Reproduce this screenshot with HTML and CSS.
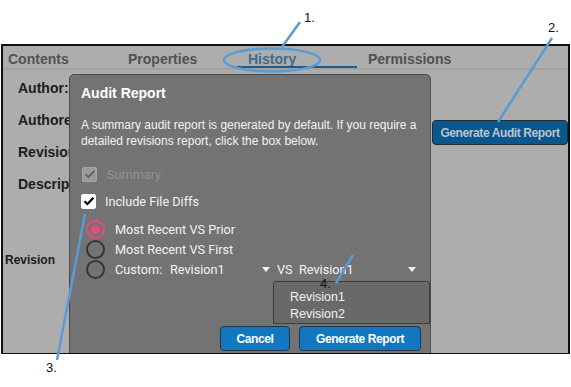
FILE: index.html
```html
<!DOCTYPE html>
<html lang="en">

<head>
    <meta charset="UTF-8">
    <meta name="viewport" content="width=device-width, initial-scale=1.0">
    <title>Audit Report</title>
    <link rel="stylesheet" href="styles.css">
</head>

<body>
    <div class="frame">
        <div class="tabs">
            <div class="tab">Contents</div>
            <div class="tab">Properties</div>
            <div class="tab active">History</div>
            <div class="tab">Permissions</div>
        </div>

        <div class="panel">
            <div class="fields">
                <div class="field">Author:</div>
                <div class="field">Authored Date:</div>
                <div class="field">Revision:</div>
                <div class="field">Description:</div>
                <div class="field small">Revision</div>
            </div>
            <div class="actions">
                <button class="btn-audit">Generate Audit Report</button>
            </div>
        </div>

        <div class="dialog">
            <h2 class="dialog-title">Audit Report</h2>
            <p class="dialog-text">A summary audit report is generated by default. If you require a detailed revisions report, click the box below.</p>

            <div class="checks">
                <label class="check-row disabled">
                    <span class="box">
                        <svg width="12" height="10" viewBox="0 0 12 10"><path d="M1.5 5.2 L4.4 8 L10.5 1.8" fill="none" stroke="#666" stroke-width="2"/></svg>
                    </span>
                    Summary
                </label>
                <label class="check-row">
                    <span class="box on">
                        <svg width="12" height="10" viewBox="0 0 12 10"><path d="M1.5 5.2 L4.4 8 L10.5 1.8" fill="none" stroke="#000" stroke-width="2.2"/></svg>
                    </span>
                    Include File Diffs
                </label>
            </div>

            <div class="radios">
                <div class="radio-row"><span class="radio checked"></span>Most Recent VS Prior</div>
                <div class="radio-row"><span class="radio"></span>Most Recent VS First</div>
                <div class="radio-row">
                    <span class="radio"></span>
                    <span class="custom-label">Custom:</span>
                    <span class="select sel-from">Revision1<i class="caret"></i></span>
                    <span class="vs">VS</span>
                    <span class="select sel-to">Revision1<i class="caret"></i></span>
                </div>
            </div>

            <div class="menu">
                <div class="menu-item">Revision1</div>
                <div class="menu-item">Revision2</div>
            </div>

            <div class="dialog-footer">
                <button class="btn btn-cancel">Cancel</button>
                <button class="btn btn-generate">Generate Report</button>
            </div>
        </div>
    </div>

    <svg class="notes" width="571" height="387" viewBox="0 0 571 387">
        <g fill="none" stroke="#5b9bd5" stroke-width="2.5">
            <ellipse cx="272" cy="60" rx="48" ry="11.5"/>
            <line x1="300" y1="22" x2="282" y2="47"/>
            <line x1="552" y1="38" x2="498" y2="122"/>
            <line x1="85" y1="214" x2="57" y2="360"/>
            <line x1="353" y1="255" x2="336" y2="283"/>
        </g>
        <g class="note-num">
            <text x="304" y="22">1.</text>
            <text x="548" y="32">2.</text>
            <text x="46" y="372">3.</text>
            <text x="320" y="288">4.</text>
        </g>
    </svg>
</body>

</html>
```

FILE: styles.css
```css
* {
    box-sizing: border-box;
}

body {
    margin: 0;
    width: 571px;
    height: 387px;
    position: relative;
    overflow: hidden;
    background-color: #ffffff;
    font-family: "Liberation Sans", Arial, sans-serif;
}

.frame {
    position: relative;
    width: 569px;
    height: 310px;
    margin: 44px 0 0 1px;
    border: 2px solid #111;
    border-bottom-width: 1px;
    background-color: #adadad;
    overflow: hidden;
}

/* tabs */
.tabs {
    display: flex;
    height: 24px;
    border-bottom: 2px solid #a2a2a2;
}

.tab {
    position: relative;
    width: 120px;
    padding-left: 5px;
    line-height: 26px;
    font-size: 14px;
    font-weight: bold;
    color: #525252;
}

.tab.active {
    color: #3f6b90;
}

.tab.active::after {
    content: "";
    position: absolute;
    left: -6px;
    right: 6px;
    bottom: 0;
    height: 2px;
    background-color: #1b5a8a;
}

/* page behind dialog */
.panel {
    display: flex;
    justify-content: space-between;
}

.fields {
    width: 66px;
    padding-top: 2px;
    overflow: hidden;
}

.field {
    padding-left: 15px;
    line-height: 32px;
    font-size: 14px;
    font-weight: bold;
    color: #1c1c1c;
    white-space: nowrap;
}

.field.small {
    padding-left: 2px;
    margin-top: 44px;
    font-size: 12px;
}

.actions {
    margin-top: 50px;
}

.btn-audit {
    width: 136px;
    height: 25px;
    padding: 0;
    border: 1px solid #1d2c38;
    border-radius: 4px;
    background-color: #0b568a;
    color: #b9c5cf;
    font-family: "Liberation Sans", Arial, sans-serif;
    font-size: 12px;
    font-weight: bold;
    letter-spacing: -0.4px;
}

/* dialog */
.dialog {
    position: absolute;
    left: 66px;
    top: 28px;
    width: 362px;
    height: 300px;
    padding: 9px 9px 0 11px;
    border: 1px solid #4a4a4a;
    border-radius: 5px;
    background-color: #737373;
    color: #f2f2f2;
}

.dialog-title {
    margin: 0;
    font-size: 14px;
    line-height: 18px;
    font-weight: bold;
    color: #ffffff;
}

.dialog-text {
    margin: 15px 0 0;
    font-size: 12px;
    line-height: 16px;
}

.checks {
    margin-top: 14px;
}

.check-row {
    display: flex;
    align-items: center;
    gap: 10px;
    height: 22px;
    margin-left: 1px;
    font-family: Roboto, sans-serif;
    font-size: 12.7px;
}

.check-row + .check-row {
    margin-top: 5px;
    margin-left: 0;
    gap: 9px;
}

.check-row.disabled {
    color: #929292;
}

.box {
    display: flex;
    align-items: center;
    justify-content: center;
    width: 15px;
    height: 15px;
    border-radius: 2px;
    background-color: #9b9b9b;
    border: 1px solid #a6a6a6;
}

.box.on {
    background-color: #ffffff;
    border-color: #ffffff;
}

.radios {
    margin-top: 7px;
}

.radio-row {
    display: flex;
    align-items: center;
    height: 20px;
    font-family: Roboto, sans-serif;
    font-size: 12.7px;
}

.radio {
    position: relative;
    width: 19px;
    height: 19px;
    margin: 0 10px 0 5px;
    border: 2px solid #363636;
    border-radius: 50%;
}

.radio.checked {
    border-color: #ea4a7e;
}

.radio.checked::after {
    content: "";
    position: absolute;
    left: 3px;
    top: 3px;
    width: 9px;
    height: 9px;
    border-radius: 50%;
    background-color: #ea4a7e;
}

.custom-label {
    width: 55px;
}

.select {
    display: flex;
    align-items: center;
    justify-content: space-between;
    padding-right: 2px;
}

.sel-from {
    width: 102px;
}

.vs {
    width: 22px;
    margin-left: 5px;
}

.sel-to {
    width: 119px;
}

.caret {
    width: 0;
    height: 0;
    border-left: 4px solid transparent;
    border-right: 4px solid transparent;
    border-top: 5px solid #f2f2f2;
}

.menu {
    position: absolute;
    left: 203px;
    top: 206px;
    width: 157px;
    height: 43px;
    padding-top: 7px;
    border: 1px solid #3c3c3c;
    border-radius: 3px 3px 0 0;
    background-color: #696969;
}

.menu-item {
    padding-left: 16px;
    line-height: 17px;
    font-size: 12.5px;
    color: #f2f2f2;
}

.dialog-footer {
    display: flex;
    justify-content: flex-end;
    gap: 9px;
    margin-top: 47px;
}

.btn {
    height: 25px;
    padding: 0;
    border: 1px solid #26364a;
    border-radius: 4px;
    background-color: #0f78c0;
    color: #ffffff;
    font-family: "Liberation Sans", Arial, sans-serif;
    font-size: 12px;
    font-weight: bold;
    letter-spacing: -0.4px;
}

.btn-cancel {
    width: 70px;
}

.btn-generate {
    width: 122px;
}

/* annotations */
.notes {
    position: absolute;
    left: 0;
    top: 0;
    pointer-events: none;
}

.note-num text {
    font-family: "Liberation Sans", Arial, sans-serif;
    font-size: 13px;
    fill: #111;
}
```
